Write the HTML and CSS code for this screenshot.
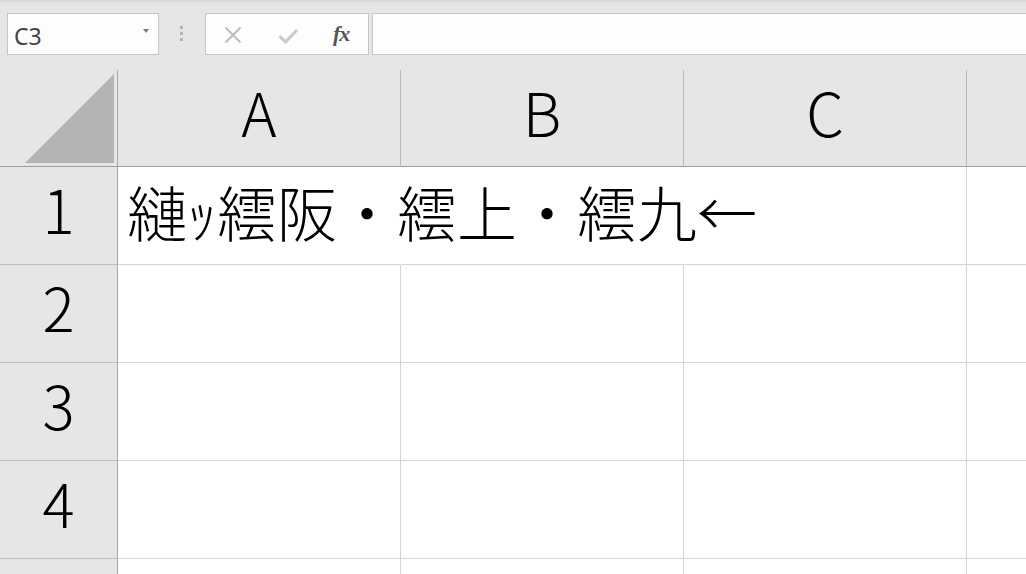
FILE: index.html
```html
<!DOCTYPE html>
<html lang="ja">
<head>
<meta charset="utf-8">
<title>Book1 - Excel</title>
<link rel="stylesheet" href="styles.css">
</head>
<body>
<div class="app">
  <div class="formula-bar">
    <div class="name-box">
      <span class="name-text">C3</span>
      <span class="caret"></span>
    </div>
    <div class="grip"><span></span><span></span><span></span></div>
    <div class="fx-buttons">
      <svg class="btn-cancel" width="18" height="18" viewBox="0 0 18 18">
        <path d="M1.5 1.5 L16.5 16.5 M16.5 1.5 L1.5 16.5" stroke="#bdbdbd" stroke-width="2" fill="none"/>
      </svg>
      <svg class="btn-enter" width="20" height="16" viewBox="0 0 20 16">
        <path d="M1.5 8 L7.5 14 L19 2" stroke="#c9c9c9" stroke-width="3" fill="none"/>
      </svg>
      <span class="btn-fx">fx</span>
    </div>
    <div class="formula-input"></div>
  </div>

  <div class="sheet">
    <div class="corner"><div class="select-all"></div></div>
    <div class="col-head">A</div>
    <div class="col-head">B</div>
    <div class="col-head">C</div>
    <div class="col-head last"></div>

    <div class="row-head">1</div>
    <div class="cell spill"><span class="value">縺ｯ繧阪・繧上・繧九←</span></div>
    <div class="cell spill"></div>
    <div class="cell"></div>
    <div class="cell last"></div>

    <div class="row-head">2</div>
    <div class="cell"></div>
    <div class="cell"></div>
    <div class="cell"></div>
    <div class="cell last"></div>

    <div class="row-head">3</div>
    <div class="cell"></div>
    <div class="cell"></div>
    <div class="cell"></div>
    <div class="cell last"></div>

    <div class="row-head">4</div>
    <div class="cell"></div>
    <div class="cell"></div>
    <div class="cell"></div>
    <div class="cell last"></div>

    <!-- next row, only its top edge is in view -->
    <div class="row-head"></div>
    <div class="cell"></div>
    <div class="cell"></div>
    <div class="cell"></div>
    <div class="cell last"></div>
  </div>
</div>
</body>
</html>
```

FILE: styles.css
```css
* {
  box-sizing: border-box;
}

html, body {
  margin: 0;
  padding: 0;
  width: 1026px;
  height: 574px;
  overflow: hidden;
  background: #e6e6e6;
}

.app {
  width: 1026px;
  height: 574px;
  overflow: hidden;
  font-family: "Noto Sans CJK JP", "Noto Sans", sans-serif;
}

/* ---- formula bar ---- */
.formula-bar {
  height: 70px;
  display: flex;
  align-items: flex-start;
  padding: 13px 0 0 7px;
  background: linear-gradient(#d3d3d3 0, #e3e3e3 3px, #e6e6e6 6px);
}

.name-box {
  width: 152px;
  height: 42px;
  border: 1px solid #c6c6c6;
  background: #fdfdfd;
  display: flex;
  align-items: center;
  justify-content: space-between;
  padding: 0 9px 0 6px;
}

.name-text {
  font-family: "Noto Sans", "Open Sans", sans-serif;
  font-size: 23px;
  color: #444;
  line-height: 1;
  margin-top: 5px;
}

.caret {
  width: 0;
  height: 0;
  border-left: 3.5px solid transparent;
  border-right: 3.5px solid transparent;
  border-top: 4px solid #7b7b7b;
  margin-top: -6px;
}

.grip {
  width: 46px;
  padding: 13px 0 0 21px;
  display: flex;
  flex-direction: column;
  gap: 3px;
}

.grip span {
  width: 3px;
  height: 3px;
  background: #b3b3b3;
}

.fx-buttons {
  width: 164px;
  height: 42px;
  border: 1px solid #c6c6c6;
  background: #fdfdfd;
  display: flex;
  align-items: center;
  padding-left: 18px;
}

.btn-cancel {
  margin-top: 2px;
}

.btn-enter {
  margin-left: 36px;
  margin-top: 4px;
}

.btn-fx {
  margin-left: 35px;
  font-family: "Liberation Serif", "DejaVu Serif", serif;
  font-style: italic;
  font-weight: bold;
  font-size: 22px;
  color: #555;
  line-height: 1;
  letter-spacing: -1px;
}

.formula-input {
  flex: 1;
  height: 42px;
  margin-left: 3px;
  margin-right: -2px;
  border: 1px solid #c6c6c6;
  background: #fdfdfd;
}

/* ---- sheet grid ---- */
.sheet {
  display: grid;
  grid-template-columns: 118px 283px 283px 283px 1fr;
  grid-template-rows: 97px repeat(5, 98px);
  background: #fff;
}

.corner {
  background: #e6e6e6;
  border-right: 1px solid #a9a9a9;
  border-bottom: 1px solid #9f9f9f;
  display: flex;
  align-items: flex-end;
  justify-content: flex-end;
  padding: 0 3px 3px 0;
}

.select-all {
  width: 89px;
  height: 89px;
  background: #b4b4b4;
  clip-path: polygon(100% 0, 100% 100%, 0 100%);
}

.col-head {
  background: #e6e6e6;
  border-right: 1px solid #b9b9b9;
  border-bottom: 1px solid #9f9f9f;
  display: flex;
  align-items: center;
  justify-content: center;
  font-size: 60px;
  font-weight: 300;
  color: #000;
  line-height: 1;
  padding-bottom: 14px;
}

.row-head {
  background: #e6e6e6;
  border-right: 1px solid #a9a9a9;
  border-bottom: 1px solid #bdbdbd;
  display: flex;
  align-items: center;
  justify-content: center;
  font-size: 60px;
  font-weight: 300;
  color: #000;
  line-height: 1;
  padding-bottom: 16px;
}

.cell {
  border-right: 1px solid #d4d4d4;
  border-bottom: 1px solid #d4d4d4;
  display: flex;
  align-items: center;
  min-width: 0;
}

.col-head.last,
.cell.last {
  border-right: none;
}

/* text from column A runs over the empty cells to its right */
.cell.spill {
  border-right-color: transparent;
}

.value {
  padding-left: 9px;
  white-space: nowrap;
  font-size: 60px;
  font-weight: 300;
  line-height: 1;
  color: #000;
  margin-bottom: 10px;
  position: relative;
  z-index: 1;
}
```
